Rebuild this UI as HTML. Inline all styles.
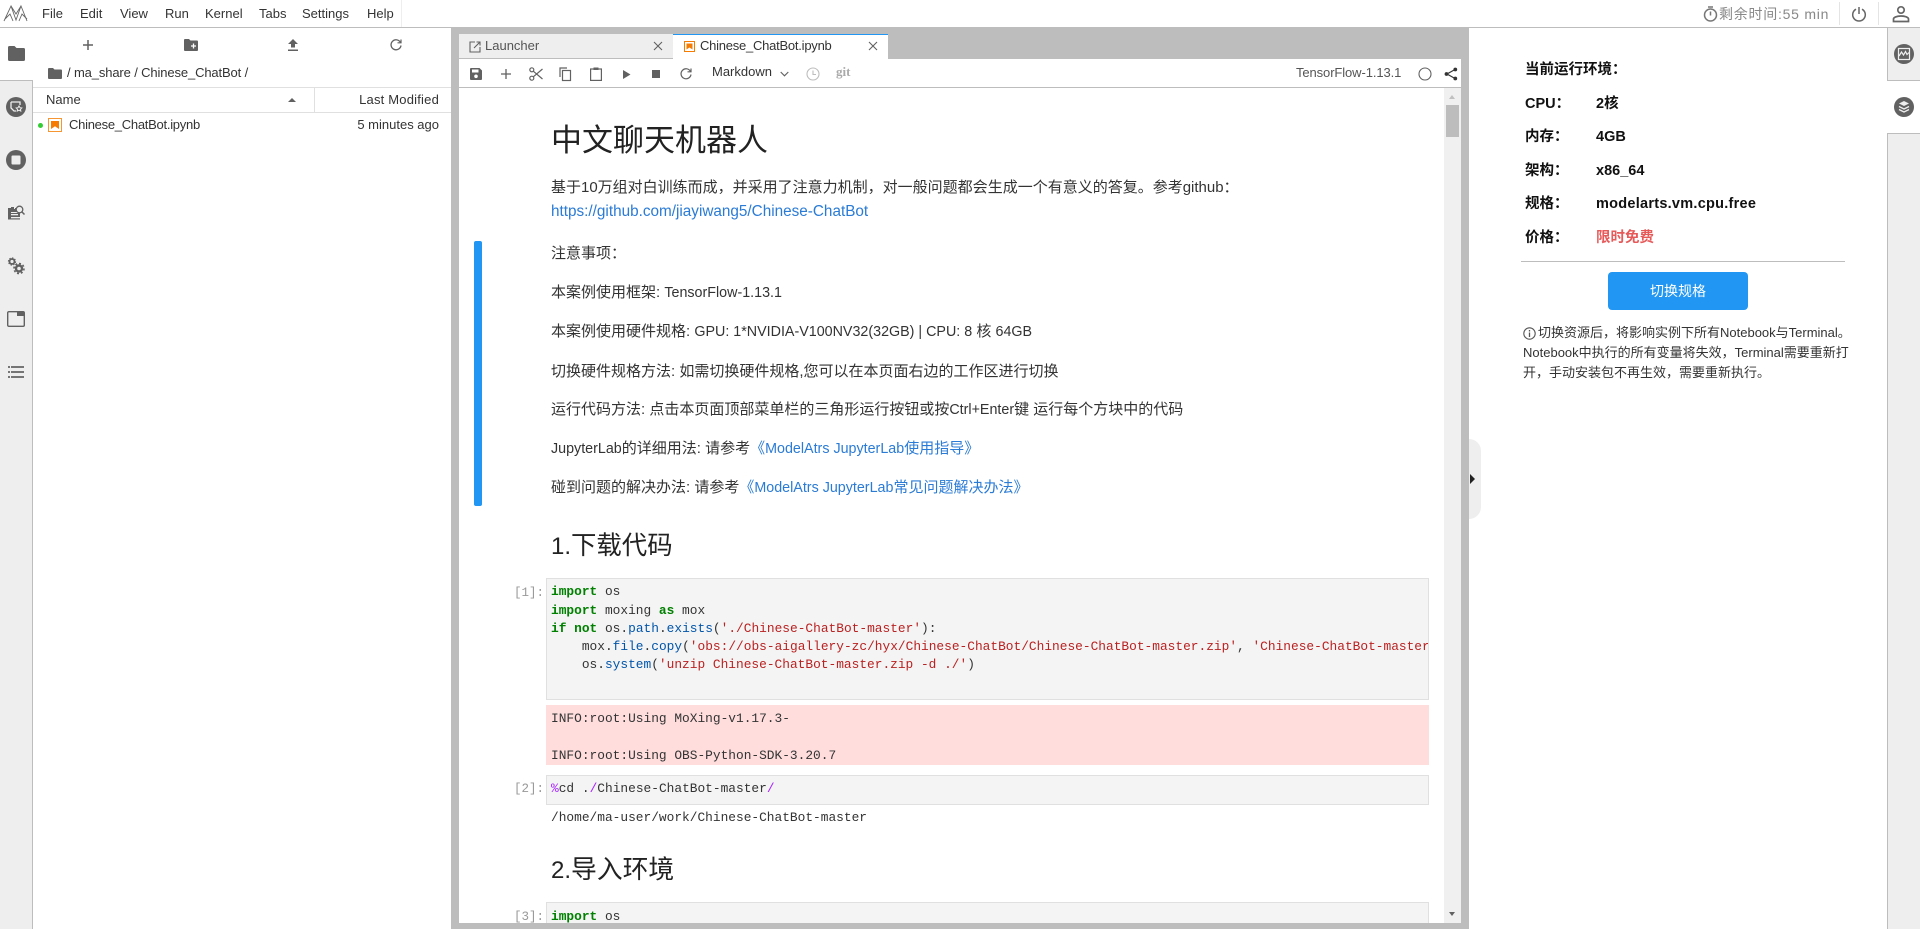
<!DOCTYPE html>
<html lang="zh"><head><meta charset="utf-8"><title>JupyterLab</title>
<style>
html,body{margin:0;padding:0;width:1920px;height:929px;overflow:hidden;background:#fff}
body{position:relative;font-family:"Liberation Sans","Noto Sans CJK SC",sans-serif;color:#333;font-size:13px}
.b{position:absolute}
.t{position:absolute;white-space:nowrap;line-height:20px;height:20px}
.i{position:absolute;overflow:visible}
.md{font-size:15px;color:#333;left:551px}
.l{font-size:14.3px}
a{color:#2a7bd6;text-decoration:none}
.m{position:absolute;white-space:pre;font-family:"Liberation Mono","DejaVu Sans Mono",monospace;font-size:12.85px;line-height:18px;height:18px;color:#333;left:551px}
.k{color:#008000;font-weight:bold}.s{color:#ba2121}.n{color:#0055aa}.p{color:#aa22ff}
.pr{position:absolute;font-family:"Liberation Mono",monospace;font-size:12.5px;color:#999;line-height:18px;left:514px}
.cell{position:absolute;left:546px;width:881px;background:#f4f4f4;border:1px solid #e0e0e0}
.r{font-weight:bold;font-size:14.5px;color:#111}
</style></head><body>

<!-- top bar -->
<div class="b" style="left:0;top:27px;width:1920px;height:1px;background:#bdbdbd"></div>
<div class="b" style="left:401px;top:0;width:1px;height:27px;background:#eee"></div>
<svg class="i" style="left:4px;top:5px" width="24" height="17" viewBox="0 0 24 17" fill="none" stroke="#666" stroke-width=".9"><path d="M0 16L7 1l5 14 5-14 6 15M7 1l5 8 5-8M1 14l5-5 3 7M23 14l-5-5-3 7"/></svg>
<div class="t" style="left:42px;top:4px">File</div>
<div class="t" style="left:80px;top:4px">Edit</div>
<div class="t" style="left:120px;top:4px">View</div>
<div class="t" style="left:165px;top:4px">Run</div>
<div class="t" style="left:205px;top:4px">Kernel</div>
<div class="t" style="left:259px;top:4px">Tabs</div>
<div class="t" style="left:302px;top:4px">Settings</div>
<div class="t" style="left:367px;top:4px">Help</div>

<svg class="i" style="left:1703px;top:6px" width="15" height="16" viewBox="0 0 15 16" fill="none" stroke="#777" stroke-width="1.5"><circle cx="7.5" cy="9" r="6"/><path d="M7.5 5.500V9.500M5 1h5"/></svg>
<div class="t" style="left:1719px;top:4px;font-size:14px;color:#888;letter-spacing:.75px">剩余时间:55 min</div>
<div class="b" style="left:1839px;top:2px;width:1px;height:23px;background:#e4e4e4"></div>
<div class="b" style="left:1878px;top:2px;width:1px;height:23px;background:#e4e4e4"></div>
<svg class="i" style="left:1851px;top:6px" width="16" height="16" viewBox="0 0 16 16" fill="none" stroke="#666" stroke-width="1.500"><path d="M5 3.200a6.300 6.300 0 1 0 6 0M8 1v7"/></svg>
<svg class="i" style="left:1892px;top:5px" width="18" height="18" viewBox="0 0 18 18" fill="none" stroke="#666" stroke-width="1.700"><circle cx="9" cy="5" r="3.200"/><path d="M1.500 16.500v-2.500c0-1.500 3-3 7.500-3s7.500 1.500 7.500 3v2.500z"/></svg>

<!-- left sidebar -->
<div class="b" style="left:0;top:80px;width:32px;height:849px;background:#eee;border-right:1px solid #bdbdbd"></div>
<div class="b" style="left:0;top:80px;width:32px;height:1px;background:#bdbdbd"></div>
<svg class="i" style="left:8px;top:46px" width="17" height="15" viewBox="0 0 17 15"><path d="M1.500 0h5l2 2h7a1.500 1.500 0 0 1 1.500 1.500V13.500A1.500 1.500 0 0 1 15.500 15h-14A1.500 1.500 0 0 1 0 13.500V1.500A1.500 1.500 0 0 1 1.500 0z" fill="#616161"/></svg>
<svg class="i" style="left:6px;top:97px" width="20" height="20" viewBox="0 0 20 20"><circle cx="10" cy="10" r="10" fill="#616161"/><path d="M5 5h9v3M5 5v6l3 3h2" fill="none" stroke="#eee" stroke-width="1.300"/><path d="M13 9l1 1.700 1.800.3-1.300 1.300.3 1.800-1.800-.9-1.800.9.300-1.800-1.300-1.300 1.800-.3z" fill="none" stroke="#eee"/></svg>
<svg class="i" style="left:6px;top:150px" width="20" height="20" viewBox="0 0 20 20"><circle cx="10" cy="10" r="10" fill="#616161"/><rect x="5.500" y="5.500" width="9" height="9" rx="1" fill="#eee"/></svg>
<svg class="i" style="left:8px;top:205px" width="17" height="17" viewBox="0 0 17 17"><path d="M0 3h3v-1h3v2h1v-1h1v3h1.500v1H3v1h9v6.500H0z" fill="#616161"/><rect x="3" y="9" width="7" height="1.300" fill="#eee"/><rect x="3" y="12" width="9" height="1.300" fill="#eee"/><circle cx="11.500" cy="4.500" r="3.300" fill="none" stroke="#616161" stroke-width="1.300"/><path d="M14 7l2.500 2.500" stroke="#616161" stroke-width="1.500"/></svg>
<svg class="i" style="left:8px;top:257px" width="17" height="18" viewBox="0 0 17 18" fill="none" stroke="#616161"><circle cx="4" cy="4.500" r="2.500" stroke-width="1.800"/><circle cx="4" cy="4.500" r="3.600" stroke-width="1" stroke-dasharray="1.500 1.300"/><circle cx="11" cy="11.500" r="3" stroke-width="2.400"/><circle cx="11" cy="11.500" r="5" stroke-width="1.600" stroke-dasharray="2 1.900"/></svg>
<svg class="i" style="left:7px;top:311px" width="18" height="16" viewBox="0 0 18 16"><rect x=".7" y=".7" width="16.600" height="14.600" rx="1.200" fill="none" stroke="#616161" stroke-width="1.400"/><rect x="10" y="1" width="7" height="4" fill="#616161"/></svg>
<svg class="i" style="left:8px;top:365px" width="16" height="14" viewBox="0 0 16 14" fill="#757575"><rect x="0" y="1" width="2" height="2"/><rect x="0" y="6" width="2" height="2"/><rect x="0" y="11" width="2" height="2"/><rect x="3" y="1" width="13" height="2"/><rect x="3" y="6" width="13" height="2"/><rect x="3" y="11" width="13" height="2"/></svg>

<!-- file browser -->
<svg class="i" style="left:82px;top:39px" width="12" height="12" viewBox="0 0 12 12"><path d="M6 1v10M1 6h10" stroke="#616161" stroke-width="1.500"/></svg>
<svg class="i" style="left:184px;top:39px" width="14" height="12" viewBox="0 0 14 12"><path d="M1 0h4l1.500 1.500H13a1 1 0 0 1 1 1V11a1 1 0 0 1-1 1H1a1 1 0 0 1-1-1V1a1 1 0 0 1 1-1z" fill="#616161"/><path d="M9.500 4.500v5M7 7h5" stroke="#fff" stroke-width="1.300"/></svg>
<svg class="i" style="left:288px;top:39px" width="10" height="12" viewBox="0 0 10 12"><path d="M5 0l5 5H7v3.500H3V5H0zM0 10.500h10V12H0z" fill="#616161"/></svg>
<svg class="i" style="left:390px;top:39px" width="12" height="12" viewBox="0 0 12 12" fill="none" stroke="#616161" stroke-width="1.300"><path d="M10.500 3.500A5 5 0 1 0 11 6.500"/><path d="M7.500 3.800h3.500V.5" stroke-width="1.200"/></svg>
<svg class="i" style="left:48px;top:68px" width="14" height="11" viewBox="0 0 14 11"><path d="M1 0h4l1.500 1.500H13a1 1 0 0 1 1 1V10a1 1 0 0 1-1 1H1a1 1 0 0 1-1-1V1a1 1 0 0 1 1-1z" fill="#616161"/></svg>
<div class="t" style="left:67px;top:63px;letter-spacing:-.13px">/ ma_share / Chinese_ChatBot /</div>
<div class="b" style="left:33px;top:87px;width:418px;height:1px;background:#e0e0e0"></div>
<div class="b" style="left:33px;top:112px;width:418px;height:1px;background:#e0e0e0"></div>
<div class="b" style="left:314px;top:88px;width:1px;height:24px;background:#e0e0e0"></div>
<div class="t" style="left:46px;top:90px">Name</div>
<div class="b" style="left:288px;top:98px;width:0;height:0;border-left:4px solid transparent;border-right:4px solid transparent;border-bottom:4px solid #616161"></div>
<div class="t" style="right:1481px;top:90px;letter-spacing:.2px">Last Modified</div>
<div class="b" style="left:38px;top:123px;width:5px;height:5px;border-radius:50%;background:#32cd32"></div>
<svg class="i" style="left:48px;top:118px" width="14" height="14" viewBox="0 0 14 14"><rect x=".5" y=".5" width="13" height="13" fill="#fff" stroke="#f57c00" opacity=".8"/><path d="M3 3h8v8L7 8.300 3 11z" fill="#f57c00"/></svg>
<div class="t" style="left:69px;top:115px;letter-spacing:-.27px">Chinese_ChatBot.ipynb</div>
<div class="t" style="right:1481px;top:115px">5 minutes ago</div>

<!-- main dock frame -->
<div class="b" style="left:451px;top:28px;width:1018px;height:6px;background:#bdbdbd"></div>
<div class="b" style="left:451px;top:28px;width:8px;height:901px;background:#bdbdbd"></div>
<div class="b" style="left:1461px;top:28px;width:8px;height:901px;background:#bdbdbd"></div>
<div class="b" style="left:459px;top:923px;width:1002px;height:6px;background:#bdbdbd;z-index:5"></div>
<div class="b" style="left:888px;top:34px;width:573px;height:25px;background:#bdbdbd"></div>

<!-- tabs -->
<div class="b" style="left:459px;top:34px;width:214px;height:24px;background:#eee;border-bottom:1px solid #bdbdbd"></div>
<div class="b" style="left:673px;top:34px;width:215px;height:24px;background:#fff;border-top:1px solid #2196f3"></div>
<svg class="i" style="left:469px;top:41px" width="12" height="12" viewBox="0 0 12 12" fill="none" stroke="#616161" stroke-width="1.100"><path d="M6 1H1v10h10V6M5 7l6-6M7.500 1H11v3.500"/></svg>
<div class="t" style="left:485px;top:36px;color:#555">Launcher</div>
<svg class="i" style="left:653px;top:41px" width="10" height="10" viewBox="0 0 10 10"><path d="M1 1l8 8M9 1l-8 8" stroke="#616161" stroke-width="1.100"/></svg>
<svg class="i" style="left:684px;top:41px" width="11" height="11" viewBox="0 0 11 11"><rect x=".5" y=".5" width="10" height="10" fill="#fff" stroke="#f57c00"/><path d="M2.500 2.500h6v6L5.500 6.500 2.500 8.500z" fill="#f57c00"/></svg>
<div class="t" style="left:700px;top:36px;color:#333;letter-spacing:-.24px">Chinese_ChatBot.ipynb</div>
<svg class="i" style="left:868px;top:41px" width="10" height="10" viewBox="0 0 10 10"><path d="M1 1l8 8M9 1l-8 8" stroke="#616161" stroke-width="1.100"/></svg>

<!-- toolbar -->
<div class="b" style="left:459px;top:87px;width:1002px;height:1px;background:#bdbdbd"></div>
<svg class="i" style="left:470px;top:68px" width="12" height="12" viewBox="0 0 12 12"><path d="M1 0h8.500L12 2.500V11a1 1 0 0 1-1 1H1a1 1 0 0 1-1-1V1a1 1 0 0 1 1-1z" fill="#616161"/><rect x="2" y="1.500" width="6.500" height="3" fill="#fff"/><circle cx="6" cy="8.300" r="1.800" fill="#fff"/></svg>
<svg class="i" style="left:501px;top:69px" width="10" height="10" viewBox="0 0 10 10"><path d="M5 0v10M0 5h10" stroke="#616161" stroke-width="1.300"/></svg>
<svg class="i" style="left:529px;top:67px" width="14" height="14" viewBox="0 0 14 14" fill="none" stroke="#616161" stroke-width="1.200"><circle cx="2.800" cy="2.800" r="2"/><circle cx="2.800" cy="11.200" r="2"/><path d="M4.300 4.200L13.500 12M4.300 9.800L13.500 2"/></svg>
<svg class="i" style="left:559px;top:67px" width="13" height="14" viewBox="0 0 13 14" fill="none" stroke="#616161" stroke-width="1.200"><path d="M1 10V1h7"/><rect x="3.500" y="3.500" width="8" height="10"/></svg>
<svg class="i" style="left:590px;top:67px" width="12" height="14" viewBox="0 0 12 14" fill="none" stroke="#616161" stroke-width="1.200"><rect x=".6" y="2" width="10.800" height="11.400"/><rect x="3.500" y=".5" width="5" height="2.500" fill="#616161" stroke="none"/></svg>
<svg class="i" style="left:623px;top:70px" width="8" height="9" viewBox="0 0 8 9"><path d="M0 0l7.500 4.500L0 9z" fill="#616161"/></svg>
<div class="b" style="left:652px;top:70px;width:8px;height:8px;background:#616161"></div>
<svg class="i" style="left:680px;top:68px" width="12" height="12" viewBox="0 0 12 12" fill="none" stroke="#616161" stroke-width="1.200"><path d="M10.500 3.500A5 5 0 1 0 11 6.500"/><path d="M7.500 3.800h3.500V.5"/></svg>
<div class="t" style="left:712px;top:62px">Markdown</div>
<svg class="i" style="left:780px;top:71px" width="9" height="6" viewBox="0 0 9 6"><path d="M.7 1l3.800 3.800L8.300 1" fill="none" stroke="#616161" stroke-width="1.100"/></svg>
<svg class="i" style="left:806px;top:67px" width="14" height="14" viewBox="0 0 14 14" fill="none" stroke="#bdbdbd" stroke-width="1.100"><circle cx="7" cy="7" r="6"/><path d="M7 3.500V7.500H10"/></svg>
<div class="t" style="left:836px;top:62px;color:#aaa;font-size:13px;font-weight:bold;font-family:'Liberation Serif',serif">git</div>
<div class="t" style="left:1296px;top:63px;color:#555;font-size:13px;letter-spacing:-.1px">TensorFlow-1.13.1</div>
<svg class="i" style="left:1418px;top:67px" width="14" height="14" viewBox="0 0 14 14"><circle cx="7" cy="7" r="6" fill="none" stroke="#616161" stroke-width="1.100"/></svg>
<svg class="i" style="left:1444px;top:67px" width="14" height="14" viewBox="0 0 14 14"><path d="M11 2.500L3 7l8 4.500" fill="none" stroke="#333" stroke-width="1.200"/><circle cx="11.300" cy="2.500" r="1.900" fill="#333"/><circle cx="2.500" cy="7" r="1.900" fill="#333"/><circle cx="11.300" cy="11.500" r="1.900" fill="#333"/></svg>

<!-- notebook -->
<div class="t" style="left:551px;top:121px;font-size:31px;line-height:40px;height:40px;color:#222">中文聊天机器人</div>
<div class="t md" style="top:178px">基于10万组对白训练而成，并采用了注意力机制，对一般问题都会生成一个有意义的答复。参考github：</div>
<div class="t md" style="top:202px;font-size:15.3px"><a>https://github.com/jiayiwang5/Chinese-ChatBot</a></div>
<div class="b" style="left:474px;top:241px;width:8px;height:265px;background:#2196f3;border-radius:2px"></div>
<div class="t md" style="top:244px">注意事项：</div>
<div class="t md" style="top:283px">本案例使用框架: <span class="l">TensorFlow-1.13.1</span></div>
<div class="t md" style="top:322px">本案例使用硬件规格: <span class="l">GPU: 1*NVIDIA-V100NV32(32GB) | CPU: 8</span> 核 <span class="l">64GB</span></div>
<div class="t md" style="top:362px">切换硬件规格方法: 如需切换硬件规格,您可以在本页面右边的工作区进行切换</div>
<div class="t md" style="top:400px">运行代码方法: 点击本页面顶部菜单栏的三角形运行按钮或按<span class="l">Ctrl+Enter</span>键 运行每个方块中的代码</div>
<div class="t md" style="top:439px"><span class="l">JupyterLab</span>的详细用法: 请参考<a>《<span class="l">ModelAtrs JupyterLab</span>使用指导》</a></div>
<div class="t md" style="top:478px">碰到问题的解决办法: 请参考<a>《<span class="l">ModelAtrs JupyterLab</span>常见问题解决办法》</a></div>
<div class="t" style="left:551px;top:526px;font-size:25.4px;line-height:40px;height:40px;color:#222"><span style="font-size:24px">1.</span>下载代码</div>

<div class="pr" style="top:584px">[1]:</div>
<div class="cell" style="top:578px;height:120px"></div>
<div class="m" style="top:583px"><span class="k">import</span> os</div>
<div class="m" style="top:602px"><span class="k">import</span> moxing <span class="k">as</span> mox</div>
<div class="m" style="top:620px"><span class="k">if</span> <span class="k">not</span> os.<span class="n">path</span>.<span class="n">exists</span>(<span class="s">'./Chinese-ChatBot-master'</span>):</div>
<div class="m" style="top:638px;width:877px;overflow:hidden">    mox.<span class="n">file</span>.<span class="n">copy</span>(<span class="s">'obs://obs-aigallery-zc/hyx/Chinese-ChatBot/Chinese-ChatBot-master.zip'</span>, <span class="s">'Chinese-ChatBot-master.zip'</span>)</div>
<div class="m" style="top:656px">    os.<span class="n">system</span>(<span class="s">'unzip Chinese-ChatBot-master.zip -d ./'</span>)</div>

<div class="b" style="left:546px;top:705px;width:883px;height:60px;background:#fdd"></div>
<div class="m" style="top:710px">INFO:root:Using MoXing-v1.17.3-</div>
<div class="m" style="top:747px">INFO:root:Using OBS-Python-SDK-3.20.7</div>

<div class="pr" style="top:780px">[2]:</div>
<div class="cell" style="top:775px;height:28px"></div>
<div class="m" style="top:780px"><span class="p">%</span>cd .<span class="p">/</span>Chinese-ChatBot-master<span class="p">/</span></div>
<div class="m" style="top:809px">/home/ma-user/work/Chinese-ChatBot-master</div>
<div class="t" style="left:551px;top:850px;font-size:25.8px;line-height:40px;height:40px;color:#222"><span style="font-size:24px">2.</span>导入环境</div>

<div class="pr" style="top:908px">[3]:</div>
<div class="cell" style="top:902px;height:40px"></div>
<div class="m" style="top:908px"><span class="k">import</span> os</div>

<!-- scrollbar -->
<div class="b" style="left:1444px;top:88px;width:17px;height:835px;background:#f0f0f0"></div>
<div class="b" style="left:1446px;top:105px;width:13px;height:32px;background:#bdbdbd"></div>
<div class="b" style="left:1449px;top:95px;width:0;height:0;border-left:3.500px solid transparent;border-right:3.500px solid transparent;border-bottom:4px solid #c0c0c0"></div>
<div class="b" style="left:1449px;top:912px;width:0;height:0;border-left:3.500px solid transparent;border-right:3.500px solid transparent;border-top:4px solid #616161"></div>

<!-- right panel -->
<div class="t r" style="left:1525px;top:60px">当前运行环境：</div>
<div class="t r" style="left:1525px;top:94px">CPU：</div><div class="t r" style="left:1596px;top:94px">2核</div>
<div class="t r" style="left:1525px;top:127px">内存：</div><div class="t r" style="left:1596px;top:127px">4GB</div>
<div class="t r" style="left:1525px;top:161px">架构：</div><div class="t r" style="left:1596px;top:161px">x86_64</div>
<div class="t r" style="left:1525px;top:194px">规格：</div><div class="t r" style="left:1596px;top:194px;letter-spacing:.26px">modelarts.vm.cpu.free</div>
<div class="t r" style="left:1525px;top:228px">价格：</div><div class="t r" style="left:1596px;top:228px;color:#e65a5a">限时免费</div>
<div class="b" style="left:1521px;top:261px;width:324px;height:1px;background:#bdbdbd"></div>
<div class="b" style="left:1608px;top:272px;width:140px;height:38px;background:#2196f3;border-radius:4px;color:#fff;text-align:center;line-height:38px;font-size:14px">切换规格</div>
<svg class="i" style="left:1523px;top:327px" width="13" height="13" viewBox="0 0 13 13"><circle cx="6.500" cy="6.500" r="5.700" fill="none" stroke="#555" stroke-width="1.100"/><path d="M6.500 5.500v4.500M6.500 3v1.500" stroke="#555" stroke-width="1.300"/></svg>
<div class="t" style="left:1538px;top:323px;color:#333">切换资源后，将影响实例下所有Notebook与Terminal。</div>
<div class="t" style="left:1523px;top:343px;color:#333">Notebook中执行的所有变量将失效，Terminal需要重新打</div>
<div class="t" style="left:1523px;top:363px;color:#333">开，手动安装包不再生效，需要重新执行。</div>

<!-- collapse handle -->
<div class="b" style="left:1469px;top:439px;width:12px;height:80px;background:#eee;border-radius:0 12px 12px 0"></div>
<div class="b" style="left:1470px;top:474px;width:0;height:0;border-top:5px solid transparent;border-bottom:5px solid transparent;border-left:5px solid #222"></div>

<!-- right sidebar -->
<div class="b" style="left:1887px;top:28px;width:32px;height:52px;background:#eee;border-left:1px solid #bdbdbd;border-bottom:1px solid #bdbdbd"></div>
<div class="b" style="left:1887px;top:133px;width:32px;height:796px;background:#eee;border-left:1px solid #bdbdbd;border-top:1px solid #bdbdbd"></div>
<svg class="i" style="left:1894px;top:44px" width="20" height="20" viewBox="0 0 20 20"><circle cx="10" cy="10" r="10" fill="#616161"/><rect x="4.500" y="4.500" width="11" height="11" fill="none" stroke="#eee" stroke-width="1.200"/><path d="M5 12l2.500-4 2 3 2-3.500 1.500 3 2-2" fill="none" stroke="#eee" stroke-width="1.200"/></svg>
<svg class="i" style="left:1894px;top:97px" width="20" height="20" viewBox="0 0 20 20"><circle cx="10" cy="10" r="10" fill="#616161"/><path d="M10 4l5 2.500L10 9 5 6.500z" fill="#eee"/><path d="M5 9.500L10 12l5-2.500M5 12.500L10 15l5-2.500" fill="none" stroke="#eee" stroke-width="1.300"/></svg>

</body></html>
